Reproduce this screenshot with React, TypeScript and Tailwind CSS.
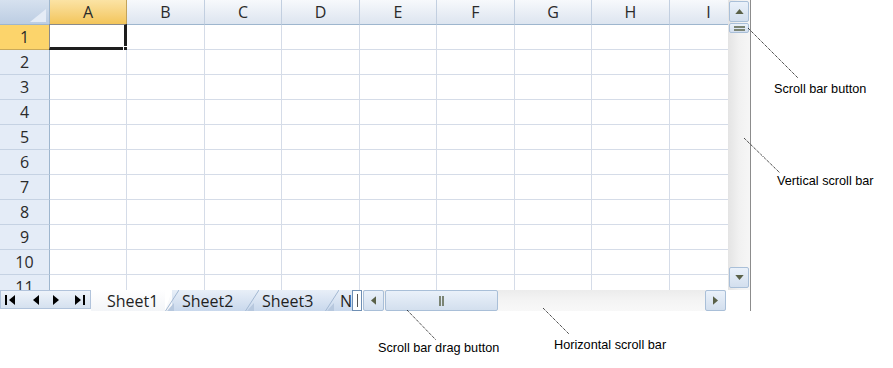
import React from 'react'

const COLS = ['A', 'B', 'C', 'D', 'E', 'F', 'G', 'H', 'I']
const WIDTHS = ['w-[77px]', 'w-[78px]', 'w-[77px]', 'w-[78px]', 'w-[77px]', 'w-[78px]', 'w-[77px]', 'w-[78px]', 'w-[78px]']
const ROWS = [1, 2, 3, 4, 5, 6, 7, 8, 9, 10, 11]

function Tri({ dir, className = '' }: { dir: 'up' | 'down' | 'left' | 'right'; className?: string }) {
  const pts = {
    up: '0,6 5,0 10,6',
    down: '0,0 10,0 5,6',
    left: '6,0 6,10 0,5',
    right: '0,0 0,10 6,5',
  }[dir]
  const box = dir === 'up' || dir === 'down' ? '0 0 10 6' : '0 0 6 10'
  return (
    <svg viewBox={box} className={className}>
      <polygon points={pts} fill="currentColor" />
    </svg>
  )
}

function ScrollBtn({ children, className = '' }: { children: React.ReactNode; className?: string }) {
  return (
    <div className={`flex items-center justify-center border border-[#a9bfd8] rounded-[2px] bg-gradient-to-b from-[#eaf1fa] to-[#d3dfee] text-[#5a6148] ${className}`}>
      {children}
    </div>
  )
}

function TabSlope({ active = false }: { active?: boolean }) {
  return (
    <svg viewBox="0 0 14 21" className="w-[14px] h-[21px] shrink-0 -mx-[7px] relative z-10">
      {active && <polygon points="0,0 7,0 0,21" fill="#ffffff" />}
      <polygon points="2,21 9,13 9,21" fill="#b7c8de" />
      <line x1="0.5" y1="21" x2="14" y2="0" stroke="#a3b8d2" strokeWidth="1" />
    </svg>
  )
}

function Sheet() {
  return (
    <div className="flex flex-col w-[751px] h-[311px] border-r border-[#8c8c8c]">
      <div className="flex h-[290px]">
        {/* grid */}
        <div className="flex flex-col w-[728px] h-[290px] overflow-hidden font-['Open_Sans',sans-serif] text-[16px] text-[#2a2a2a]">
          <div className="flex h-[25px] shrink-0">
            <div className="relative w-[50px] shrink-0 border-r border-b border-[#9eb6ce] bg-gradient-to-b from-[#d6e1ef] to-[#bccde3]">
              <svg viewBox="0 0 16 13" className="absolute right-[3px] bottom-[2px] w-[16px] h-[13px]">
                <polygon points="16,0 16,13 0,13" fill="#e5ecf6" />
              </svg>
            </div>
            {COLS.map((c, i) => (
              <div
                key={c}
                className={`${WIDTHS[i]} shrink-0 flex items-center justify-center border-r border-b ${
                  i === 0
                    ? 'bg-gradient-to-b from-[#fbe3a4] to-[#f3c559] border-[#c2a35a]'
                    : 'bg-gradient-to-b from-[#f7f9fc] to-[#dde5f0] border-[#c2cfe0] border-b-[#9eb6ce]'
                }`}
              >
                {c}
              </div>
            ))}
          </div>
          {ROWS.map((r) => (
            <div key={r} className="flex h-[25px] shrink-0">
              <div
                className={`w-[50px] shrink-0 flex items-center justify-center border-r border-b ${
                  r === 1 ? 'bg-[#fcd46b] border-[#c9a95a] border-r-[#9eb6ce]' : 'bg-[#e4ecf7] border-[#c5d2e3] border-r-[#9eb6ce]'
                }`}
              >
                {r}
              </div>
              {COLS.map((c, i) => (
                <div key={c} className={`${WIDTHS[i]} shrink-0 relative border-r border-b border-[#d5dce8] bg-white`}>
                  {r === 1 && i === 0 && (
                    <div className="absolute -left-[1px] -top-[1px] right-[-1px] bottom-[-1px] border-l border-t border-[#8a8a8a] border-r-[3px] border-b-[3px] border-r-[#1e1e1e] border-b-[#1e1e1e]">
                      <div className="absolute -right-[5px] -bottom-[5px] w-[6px] h-[6px] bg-[#1e1e1e] border border-white" />
                    </div>
                  )}
                </div>
              ))}
            </div>
          ))}
        </div>
        {/* vertical scroll bar */}
        <div className="flex flex-col w-[22px] h-[290px] bg-gradient-to-r from-[#e4e4e4] via-[#f1f1f1] to-[#f6f6f6] px-[1px] pt-[1px] pb-[2px]">
          <ScrollBtn className="h-[21px]">
            <Tri dir="up" className="w-[9px] h-[5px]" />
          </ScrollBtn>
          <ScrollBtn className="h-[10px] mt-[1px]">
            <div className="flex flex-col gap-[1px]">
              <div className="w-[11px] h-[2px] bg-[#7b8474]" />
              <div className="w-[11px] h-[2px] bg-[#7b8474]" />
            </div>
          </ScrollBtn>
          <div className="flex-1" />
          <ScrollBtn className="h-[21px]">
            <Tri dir="down" className="w-[9px] h-[5px]" />
          </ScrollBtn>
        </div>
      </div>
      {/* sheet tabs + horizontal scroll */}
      <div className="flex h-[21px] font-['Open_Sans',sans-serif] text-[16px] text-[#1f1f1f]">
        <div className="flex items-center w-[91px] shrink-0 h-[19px] border border-[#b1c3db] bg-gradient-to-b from-[#eef3fa] to-[#d5e1ef] text-black">
          <div className="flex items-center ml-[4px] w-[11px]">
            <div className="w-[2px] h-[10px] bg-black" />
            <Tri dir="left" className="w-[6px] h-[10px] ml-[2px]" />
          </div>
          <Tri dir="left" className="w-[6px] h-[10px] ml-[17px]" />
          <Tri dir="right" className="w-[6px] h-[10px] ml-[14px]" />
          <div className="flex items-center ml-[16px]">
            <Tri dir="right" className="w-[6px] h-[10px]" />
            <div className="w-[2px] h-[10px] bg-black ml-[2px]" />
          </div>
        </div>
        <div className="flex w-[261px] shrink-0 overflow-hidden bg-gradient-to-b from-[#e8eff8] to-[#c9d8ec]">
          <div className="flex items-center w-[81px] shrink-0 pl-[16px] bg-gradient-to-b from-white to-[#f3f5f8] leading-none">Sheet1</div>
          <TabSlope active />
          <div className="flex items-center w-[80px] shrink-0 pl-[10px] leading-none">Sheet2</div>
          <TabSlope />
          <div className="flex items-center w-[80px] shrink-0 pl-[10px] leading-none">Sheet3</div>
          <TabSlope />
          <div className="flex items-center w-[20px] shrink-0 pl-[8px] leading-none">N</div>
        </div>
        <div className="flex items-center justify-center w-[10px] h-[21px] shrink-0 border border-[#6f8fb4] bg-white">
          <div className="w-[1px] h-[13px] bg-[#555]" />
        </div>
        <div className="flex flex-1 h-[21px] ml-[1px] bg-gradient-to-b from-[#ececec] via-[#f4f4f4] to-[#f8f8f8]">
          <ScrollBtn className="w-[21px] h-[21px] shrink-0">
            <Tri dir="left" className="w-[5px] h-[9px]" />
          </ScrollBtn>
          <ScrollBtn className="w-[113px] h-[21px] shrink-0 ml-[1px]">
            <div className="flex gap-[1px]">
              <div className="w-[2px] h-[10px] bg-[#7b8474]" />
              <div className="w-[2px] h-[10px] bg-[#7b8474]" />
            </div>
          </ScrollBtn>
          <div className="flex-1" />
          <ScrollBtn className="w-[21px] h-[21px] shrink-0">
            <Tri dir="right" className="w-[5px] h-[9px]" />
          </ScrollBtn>
          <div className="w-[24px] shrink-0 bg-white" />
        </div>
      </div>
    </div>
  )
}

export default function App() {
  return (
    <div className="relative w-[893px] h-[368px] bg-white overflow-hidden">
      <Sheet />
      {/* callouts */}
      <svg className="absolute inset-0 w-[893px] h-[368px] pointer-events-none" viewBox="0 0 893 368">
        <g stroke="#000" strokeWidth="1" strokeDasharray="1 1">
          <line x1="748" y1="28" x2="798" y2="78" />
          <line x1="744" y1="138" x2="780" y2="173" />
          <line x1="407" y1="310" x2="436" y2="340" />
          <line x1="543" y1="308" x2="569" y2="334" />
        </g>
      </svg>
      <div className="absolute left-[774px] top-[82px] font-['Liberation_Sans',Arial,sans-serif] text-[12.7px] leading-[14px] text-black">Scroll bar button</div>
      <div className="absolute left-[777px] top-[174px] font-['Liberation_Sans',Arial,sans-serif] text-[12.7px] leading-[14px] text-black">Vertical scroll bar</div>
      <div className="absolute left-[378px] top-[341px] font-['Liberation_Sans',Arial,sans-serif] text-[12.7px] leading-[14px] text-black">Scroll bar drag button</div>
      <div className="absolute left-[554px] top-[338px] font-['Liberation_Sans',Arial,sans-serif] text-[12.7px] leading-[14px] text-black">Horizontal scroll bar</div>
    </div>
  )
}
